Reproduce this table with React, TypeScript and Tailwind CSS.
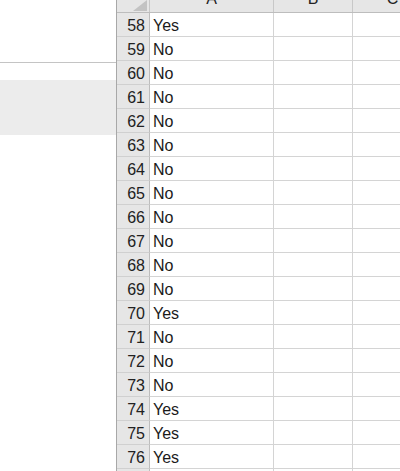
import React from "react";

const rows: [number, string][] = [
  [58, "Yes"], [59, "No"], [60, "No"], [61, "No"], [62, "No"], [63, "No"], [64, "No"],
  [65, "No"], [66, "No"], [67, "No"], [68, "No"], [69, "No"], [70, "Yes"], [71, "No"],
  [72, "No"], [73, "No"], [74, "Yes"], [75, "Yes"], [76, "Yes"], [77, ""],
];

export default function App() {
  return (
    <div className="w-[400px] h-[471px] overflow-hidden flex bg-white" style={{ fontFamily: '"Liberation Sans", Arial, sans-serif' }}>
      <div className="w-[116px] shrink-0 flex flex-col">
        <div className="h-[62px]" />
        <div className="h-[1px] bg-[#c4c4c4]" />
        <div className="h-[17px]" />
        <div className="h-[55px] bg-[#ececec]" />
      </div>
      <div className="flex-1 flex flex-col border-l border-[#a8a8a8] min-w-0">
        <div className="flex h-[13px] overflow-hidden items-end bg-[#e6e6e6] border-b border-[#bdbdbd] shrink-0">
          <div className="w-[33px] shrink-0 h-full border-r border-[#c8c8c8] relative">
            <svg className="absolute right-[2px] bottom-[1px]" width="18" height="11" viewBox="0 0 18 11">
              <polygon points="18,0 18,11 4,11" fill="#c3c3c3" />
            </svg>
          </div>
          <div className="w-[124px] shrink-0 h-[26px] flex items-center justify-center border-r border-[#c8c8c8] text-[16px] text-[#222]">A</div>
          <div className="w-[79px] shrink-0 h-[26px] flex items-center justify-center border-r border-[#c8c8c8] text-[16px] text-[#222]">B</div>
          <div className="w-[79px] shrink-0 h-[26px] flex items-center justify-center text-[16px] text-[#222]">C</div>
        </div>
        {rows.map(([n, v]) => (
          <div key={n} className="flex h-[24px] shrink-0">
            <div className="w-[33px] shrink-0 bg-[#e6e6e6] border-r border-[#bdbdbd] border-b border-b-[#d0d0d0] flex items-center justify-end pr-[4px] pt-[2px] text-[16px] text-[#222]">
              {v ? n : ""}
            </div>
            <div className="w-[124px] shrink-0 border-r border-b border-[#d4d4d4] flex items-center pl-[3px] pt-[2px] text-[16px] text-[#1a1a1a]">{v}</div>
            <div className="w-[79px] shrink-0 border-r border-b border-[#d4d4d4]" />
            <div className="w-[79px] shrink-0 border-b border-[#d4d4d4]" />
          </div>
        ))}
      </div>
    </div>
  );
}
